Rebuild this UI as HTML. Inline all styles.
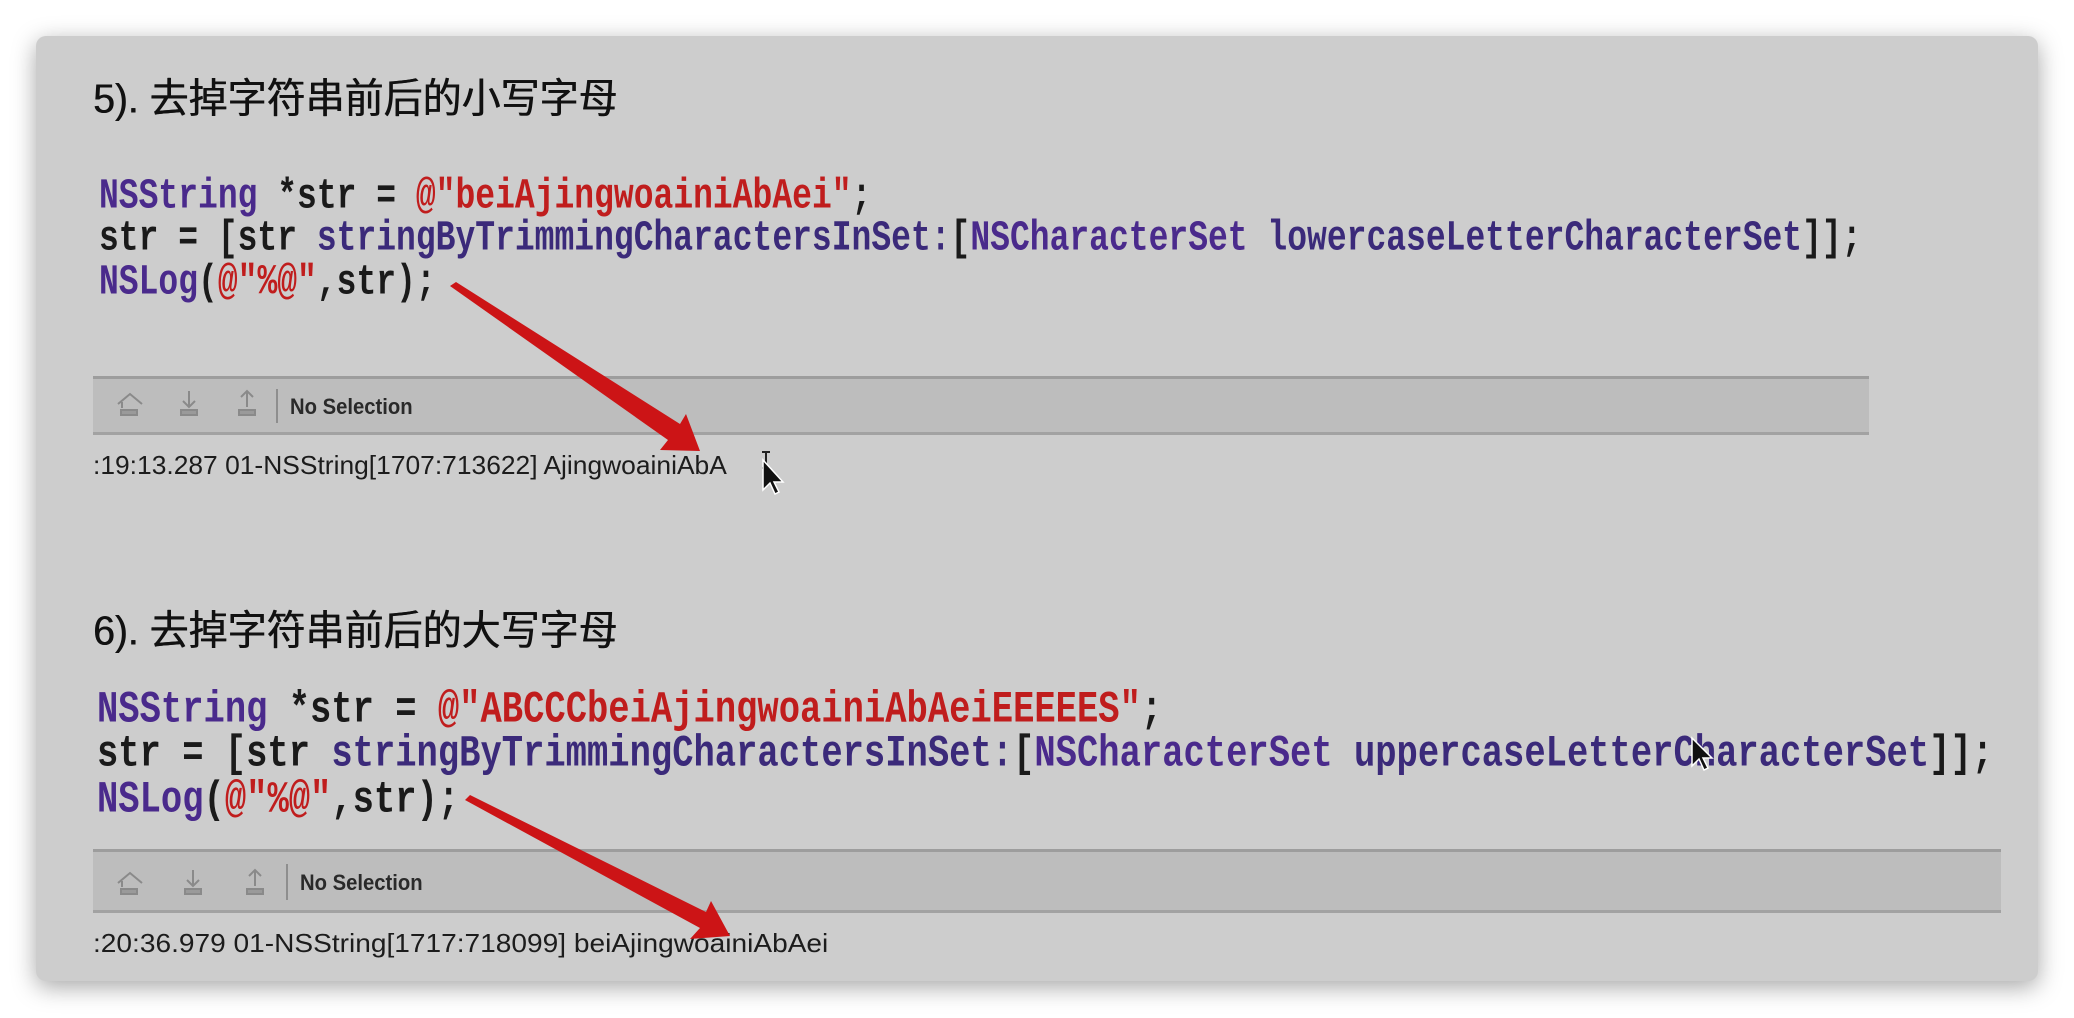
<!DOCTYPE html>
<html><head><meta charset="utf-8"><style>
body{margin:0;width:2074px;height:1018px;background:#fff;position:relative;overflow:hidden}
.card{position:absolute;left:36px;top:36px;width:2002px;height:945px;background:#cdcdcd;border-radius:10px;box-shadow:0 6px 24px rgba(0,0,0,.35)}
.t{position:absolute;font-family:"Liberation Sans","Noto Sans CJK SC",sans-serif;font-size:39px;color:#111;white-space:nowrap;line-height:1;text-shadow:0.6px 0 0 #111;transform:scaleY(1.05)}
.c{position:absolute;font-family:"Liberation Mono",monospace;white-space:nowrap;line-height:1;transform-origin:left center;color:#1a1a1a;font-weight:bold}
.p{color:#4a2a8c}.m{color:#3b2a7a}.r{color:#c01d1d}
.bar{position:absolute;left:93px;background:#bdbdbd;border-top:3px solid #9d9d9d;border-bottom:3px solid #a2a2a2;box-sizing:border-box}
.ns{position:absolute;font-family:"Liberation Sans",sans-serif;font-size:22px;font-weight:bold;color:#2a2a2a;transform:scaleX(.92);transform-origin:left}
.sep{position:absolute;width:2px;background:#8e8e8e}
.log{position:absolute;left:93px;font-family:"Liberation Sans",sans-serif;font-size:26px;color:#1c1c1c;white-space:nowrap;transform-origin:left;line-height:1}
</style></head><body>
<div class="card"></div>
<div class="t" style="left:93px;top:80px">5). 去掉字符串前后的小写字母</div>
<div class="c" style="left:99px;top:180px;font-size:33px;transform:scaleY(1.3)"><span class="p">NSString</span> *str = <span class="r">@"beiAjingwoainiAbAei"</span>;</div>
<div class="c" style="left:99px;top:222px;font-size:33px;transform:scaleY(1.3)">str = [str <span class="m">stringByTrimmingCharactersInSet:</span>[<span class="p">NSCharacterSet</span> <span class="m">lowercaseLetterCharacterSet</span>]];</div>
<div class="c" style="left:99px;top:266px;font-size:33px;transform:scaleY(1.3)"><span class="p">NSLog</span>(<span class="r">@"%@"</span>,str);</div>

<div class="bar" style="top:376px;width:1776px;height:59px"></div>
<div class="sep" style="left:276px;top:389px;height:34px"></div>
<div class="ns" style="left:290px;top:394px">No Selection</div>
<div class="log" style="top:452px;transform:scaleX(1.015)">:19:13.287 01-NSString[1707:713622] AjingwoainiAbA</div>

<div class="t" style="left:93px;top:612px">6). 去掉字符串前后的大写字母</div>
<div class="c" style="left:97px;top:692px;font-size:35.5px;transform:scaleY(1.25)"><span class="p">NSString</span> *str = <span class="r">@"ABCCCbeiAjingwoainiAbAeiEEEEES"</span>;</div>
<div class="c" style="left:97px;top:736px;font-size:35.5px;transform:scaleY(1.25)">str = [str <span class="m">stringByTrimmingCharactersInSet:</span>[<span class="p">NSCharacterSet</span> <span class="m">uppercaseLetterCharacterSet</span>]];</div>
<div class="c" style="left:97px;top:782px;font-size:35.5px;transform:scaleY(1.25)"><span class="p">NSLog</span>(<span class="r">@"%@"</span>,str);</div>

<div class="bar" style="top:849px;width:1908px;height:64px"></div>
<div class="sep" style="left:286px;top:864px;height:36px"></div>
<div class="ns" style="left:300px;top:870px">No Selection</div>
<div class="log" style="top:930px;transform:scaleX(1.08)">:20:36.979 01-NSString[1717:718099] beiAjingwoainiAbAei</div>

<svg style="position:absolute;left:0;top:0" width="2074" height="1018">
<g fill="none" stroke="#8a8a8a" stroke-width="2">
<path d="M118 404 l12-10 12 10 M122 402 v6"/><rect x="121" y="410" width="16" height="5" fill="#9a9a9a"/>
<path d="M189 391 v16 M183 401 l6 6 6-6"/><rect x="181" y="410" width="16" height="5" fill="#9a9a9a"/>
<path d="M247 407 v-16 M241 397 l6-6 6 6"/><rect x="239" y="410" width="16" height="5" fill="#9a9a9a"/>
<path d="M118 883 l12-10 12 10 M122 881 v6"/><rect x="121" y="889" width="16" height="5" fill="#9a9a9a"/>
<path d="M193 870 v16 M187 880 l6 6 6-6"/><rect x="185" y="889" width="16" height="5" fill="#9a9a9a"/>
<path d="M255 886 v-16 M249 876 l6-6 6 6"/><rect x="247" y="889" width="16" height="5" fill="#9a9a9a"/>
</g>
<g fill="#cc1416">
<polygon points="450,286 456,282 680,424 686,414 700,451 660,450 668,440"/>
<polygon points="465,800 470,795 706,912 711,901 730,936 690,939 700,928"/>
</g>
<g stroke="#222" stroke-width="2" fill="none"><path d="M762 452 h8 M766 452 v16 M762 468 h8"/></g>
<path d="M763 460 v30 l7-7 5 11 4-2 -5-10 9 0 z" fill="#111" stroke="#fff" stroke-width="1.5"/>
<path d="M1692 738 v28 l7-7 5 11 4-2 -5-10 9 0 z" fill="#111" stroke="#fff" stroke-width="1.5"/>
</svg>
</body></html>
